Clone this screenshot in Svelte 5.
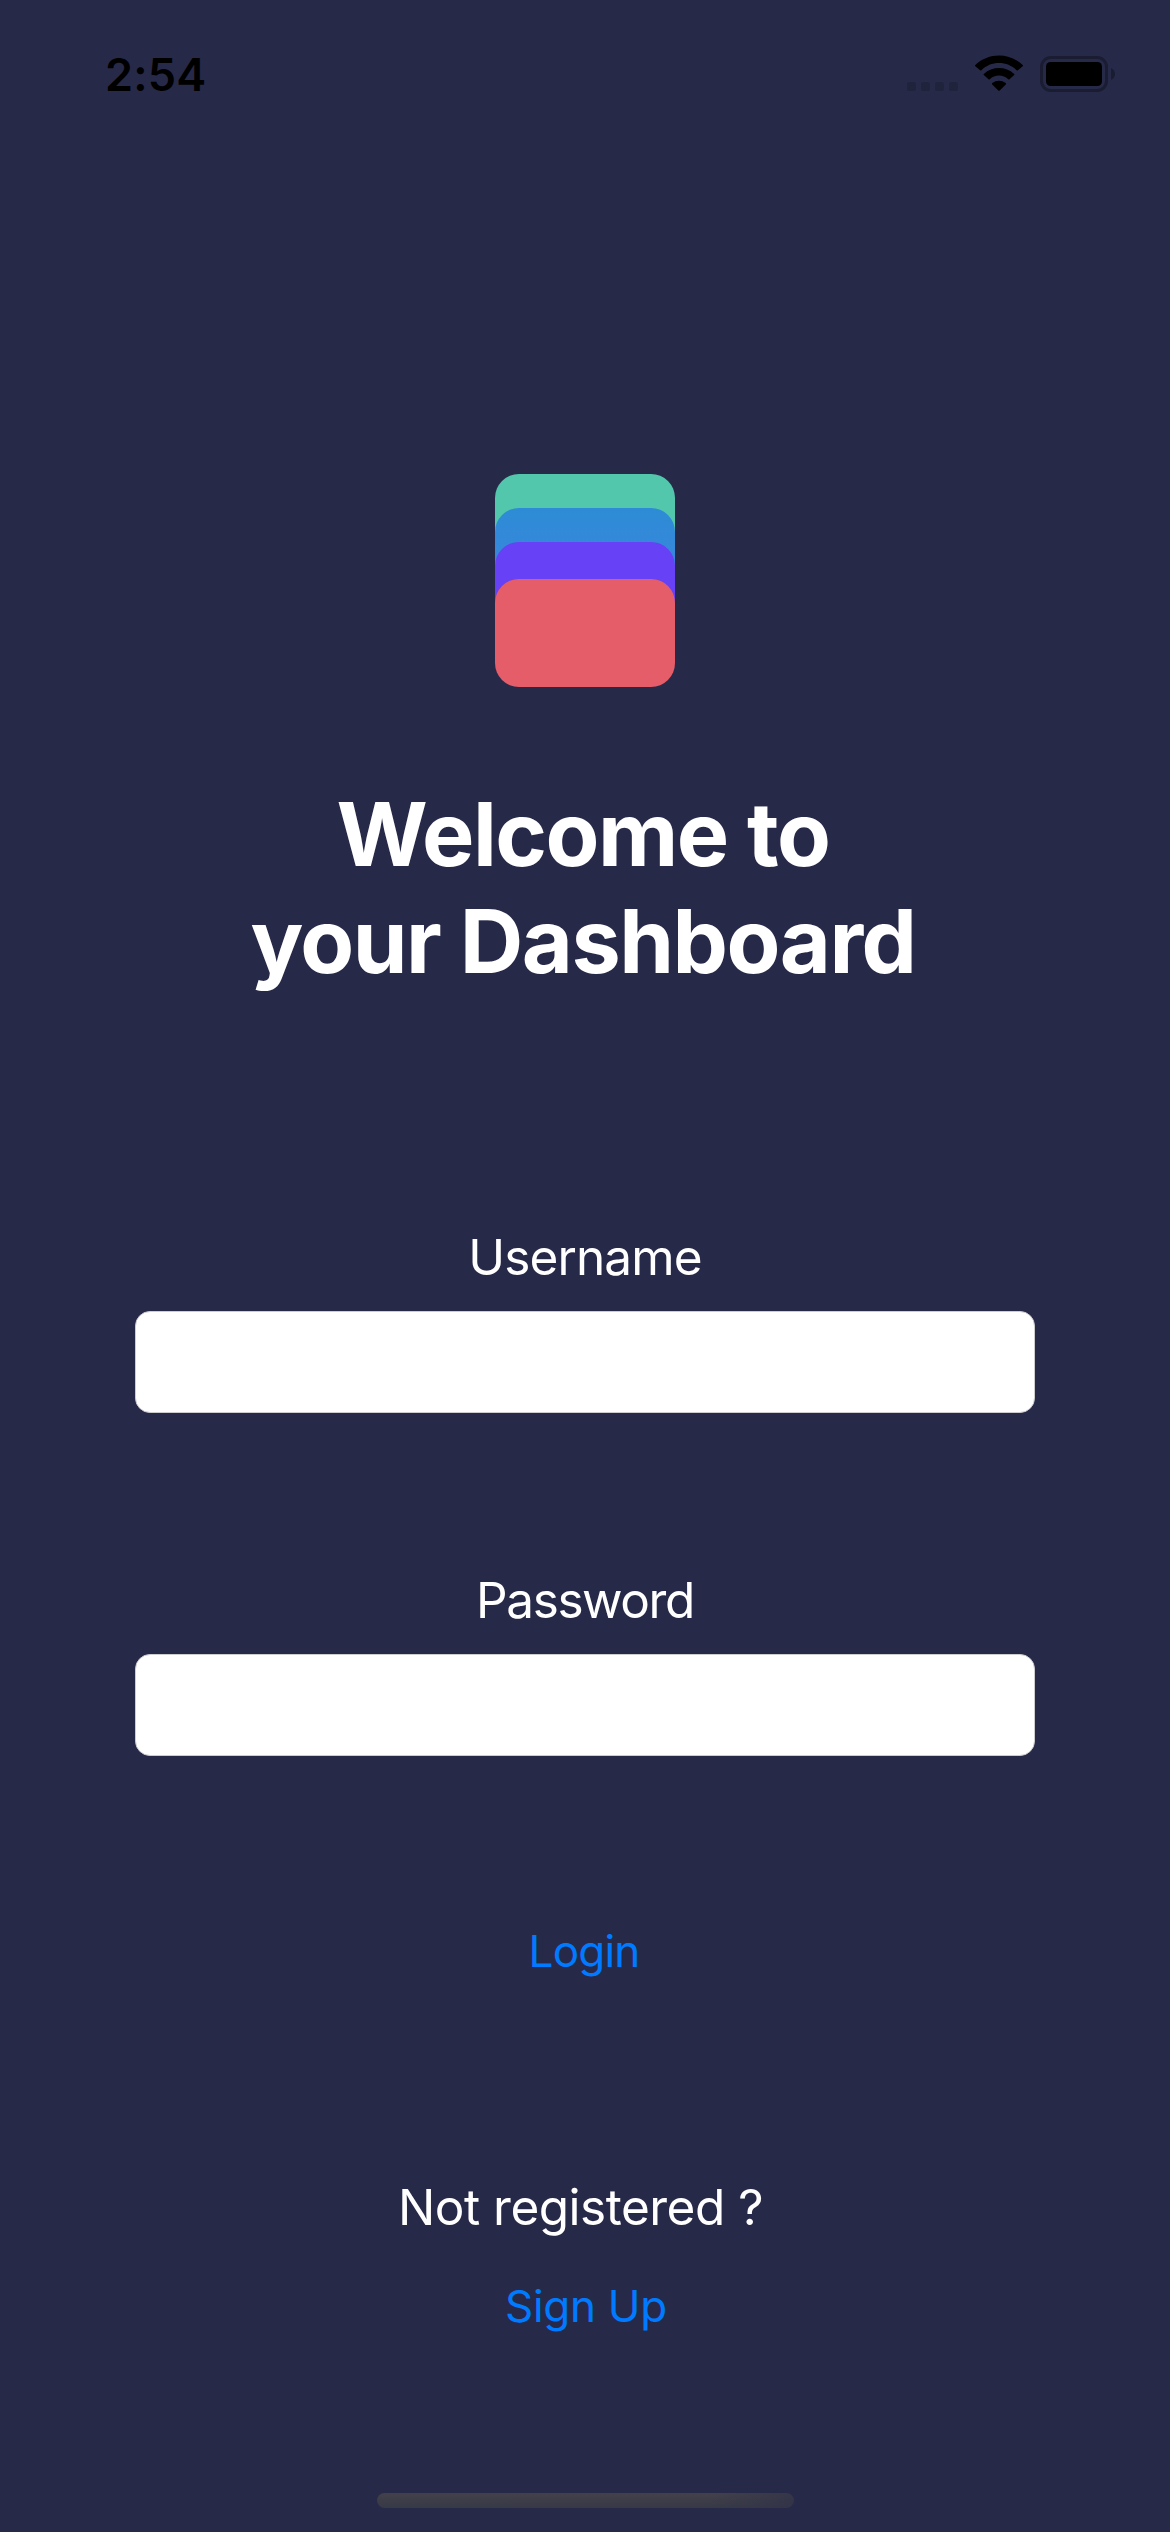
<script>
  let username = $state('');
  let password = $state('');
</script>

<div class="screen">
  <header class="status">
    <span class="time">2:54</span>
    <div class="indicators">
      <svg class="dots" width="51" height="10" viewBox="0 0 51 10">
        <rect x="0" y="0" width="9" height="9" rx="2.6" />
        <rect x="14" y="0" width="9" height="9" rx="2.6" />
        <rect x="28" y="0" width="9" height="9" rx="2.6" />
        <rect x="42" y="0" width="9" height="9" rx="2.6" />
      </svg>
      <svg class="wifi" width="50" height="37" viewBox="0 0 50 37">
        <path d="M25 8.1C31.7 8.1 37.9 10.7 42.6 15.2C43 15.6 43.5 15.6 43.9 15.2L48.7 11.3C49.1 10.9 49.1 10.5 48.7 10.1C35.5 -2.6 14.5 -2.6 1.3 10.1C0.9 10.5 0.9 10.9 1.3 11.3L6.1 15.2C6.5 15.6 7 15.6 7.4 15.2C12.1 10.7 18.3 8.1 25 8.1Z" />
        <path d="M25 20.6C28.5 20.6 31.7 21.9 34.2 24.2C34.6 24.6 35.1 24.6 35.5 24.2L40.2 20.1C40.6 19.7 40.6 19.3 40.2 18.9C31.7 11 18.3 11 9.8 18.9C9.4 19.3 9.4 19.7 9.8 20.1L14.5 24.2C14.9 24.6 15.4 24.6 15.8 24.2C18.3 21.9 21.5 20.6 25 20.6Z" />
        <path d="M31.8 28.1C32.2 28.5 32.2 29 31.8 29.4L25.7 35.5C25.3 35.9 24.7 35.9 24.3 35.5L18.2 29.4C17.8 29 17.8 28.5 18.2 28.1C22.1 24.8 27.9 24.8 31.8 28.1Z" />
      </svg>
      <svg class="battery" width="76" height="36" viewBox="0 0 76 36">
        <rect x="1.5" y="1.5" width="65" height="33" rx="9.5" fill="none" stroke="#1a1c32" stroke-width="3" />
        <rect x="6" y="6" width="56" height="24" rx="4.5" />
        <path d="M71 12.2C73.4 13 75 15.3 75 18C75 20.7 73.4 23 71 23.8Z" fill="#1a1c32" />
      </svg>
    </div>
  </header>

  <main>
    <svg class="logo" width="180" height="213" viewBox="0 0 180 213">
      <defs>
        <linearGradient id="blue" x1="0" y1="0" x2="0" y2="1">
          <stop offset="0" stop-color="#2d8cd5" />
          <stop offset="1" stop-color="#4381e4" />
        </linearGradient>
      </defs>
      <rect y="0" width="180" height="108" rx="24" fill="#53c7ac" />
      <rect y="34" width="180" height="108" rx="24" fill="url(#blue)" />
      <rect y="68" width="180" height="108" rx="24" fill="#6741f5" />
      <rect y="105" width="180" height="108" rx="24" fill="#e55d69" />
    </svg>

    <h1>Welcome to<br />your Dashboard</h1>

    <form onsubmit={(e) => e.preventDefault()}>
      <label class="label user" for="username">Username</label>
      <input id="username" type="text" bind:value={username} />
      <label class="label pass" for="password">Password</label>
      <input id="password" type="password" bind:value={password} />
      <button class="link login" type="submit">Login</button>
    </form>

    <p class="label ask">Not registered ?</p>
    <button class="link signup" type="button">Sign Up</button>
  </main>

  <div class="home"></div>
</div>

<style>
  :global(body) {
    margin: 0;
    background: #272948;
  }

  .screen {
    box-sizing: border-box;
    width: 1170px;
    height: 2532px;
    display: flex;
    flex-direction: column;
    align-items: center;
    overflow: hidden;
    background: #272948;
    color: #fff;
    font-family: Inter, 'Liberation Sans', sans-serif;
  }

  .status {
    box-sizing: border-box;
    width: 100%;
    height: 141px;
    flex: none;
    padding: 48px 54px 0 105px;
    display: flex;
    justify-content: space-between;
    align-items: flex-start;
    color: #000;
  }

  .time {
    font-size: 45px;
    line-height: 54px;
    font-weight: 600;
    letter-spacing: 0.2px;
  }

  .indicators {
    display: flex;
    align-items: flex-end;
    height: 44px;
  }

  .dots {
    fill: #1f233c;
    margin-right: 16px;
  }

  .wifi {
    margin-right: 16px;
  }

  main {
    display: flex;
    flex-direction: column;
    align-items: center;
    padding-top: 333px;
  }

  .logo {
    display: block;
  }

  h1 {
    margin: 94px 0 0;
    padding-right: 4px;
    font-size: 88px;
    line-height: 107px;
    font-weight: 700;
    letter-spacing: -1.5px;
    text-align: center;
    white-space: nowrap;
  }

  form {
    width: 900px;
    margin-top: 232px;
    display: flex;
    flex-direction: column;
    align-items: center;
  }

  .label {
    margin: 0;
    font-size: 49.5px;
    line-height: 60px;
    font-weight: 400;
    white-space: pre;
  }

  input {
    box-sizing: border-box;
    width: 900px;
    height: 102px;
    margin: 24px 0 0;
    padding: 0 21px;
    border: 1px solid #cdcdd0;
    border-radius: 15px;
    background: #fff;
    font: inherit;
    font-size: 42px;
    outline: none;
  }

  .user {
    letter-spacing: -0.85px;
  }

  .pass {
    margin-top: 157px;
    letter-spacing: -1.4px;
  }

  .link {
    border: 0;
    padding: 0;
    background: none;
    color: #007aff;
    font-family: inherit;
    font-size: 44px;
    line-height: 54px;
    font-weight: 400;
  }

  .login {
    margin-top: 168px;
    padding-right: 2px;
    letter-spacing: -0.8px;
  }

  .ask {
    margin-top: 199px;
    padding-right: 9px;
    letter-spacing: -0.5px;
  }

  .signup {
    margin-top: 42px;
    padding-left: 2px;
    letter-spacing: -0.3px;
  }

  .home {
    width: 417px;
    height: 15px;
    margin-top: auto;
    margin-bottom: 24px;
    flex: none;
    border-radius: 8px;
    background: linear-gradient(100deg, transparent 80%, rgba(48, 49, 72, 0.7) 100%),
      linear-gradient(#42414b, #383947);
  }
</style>
